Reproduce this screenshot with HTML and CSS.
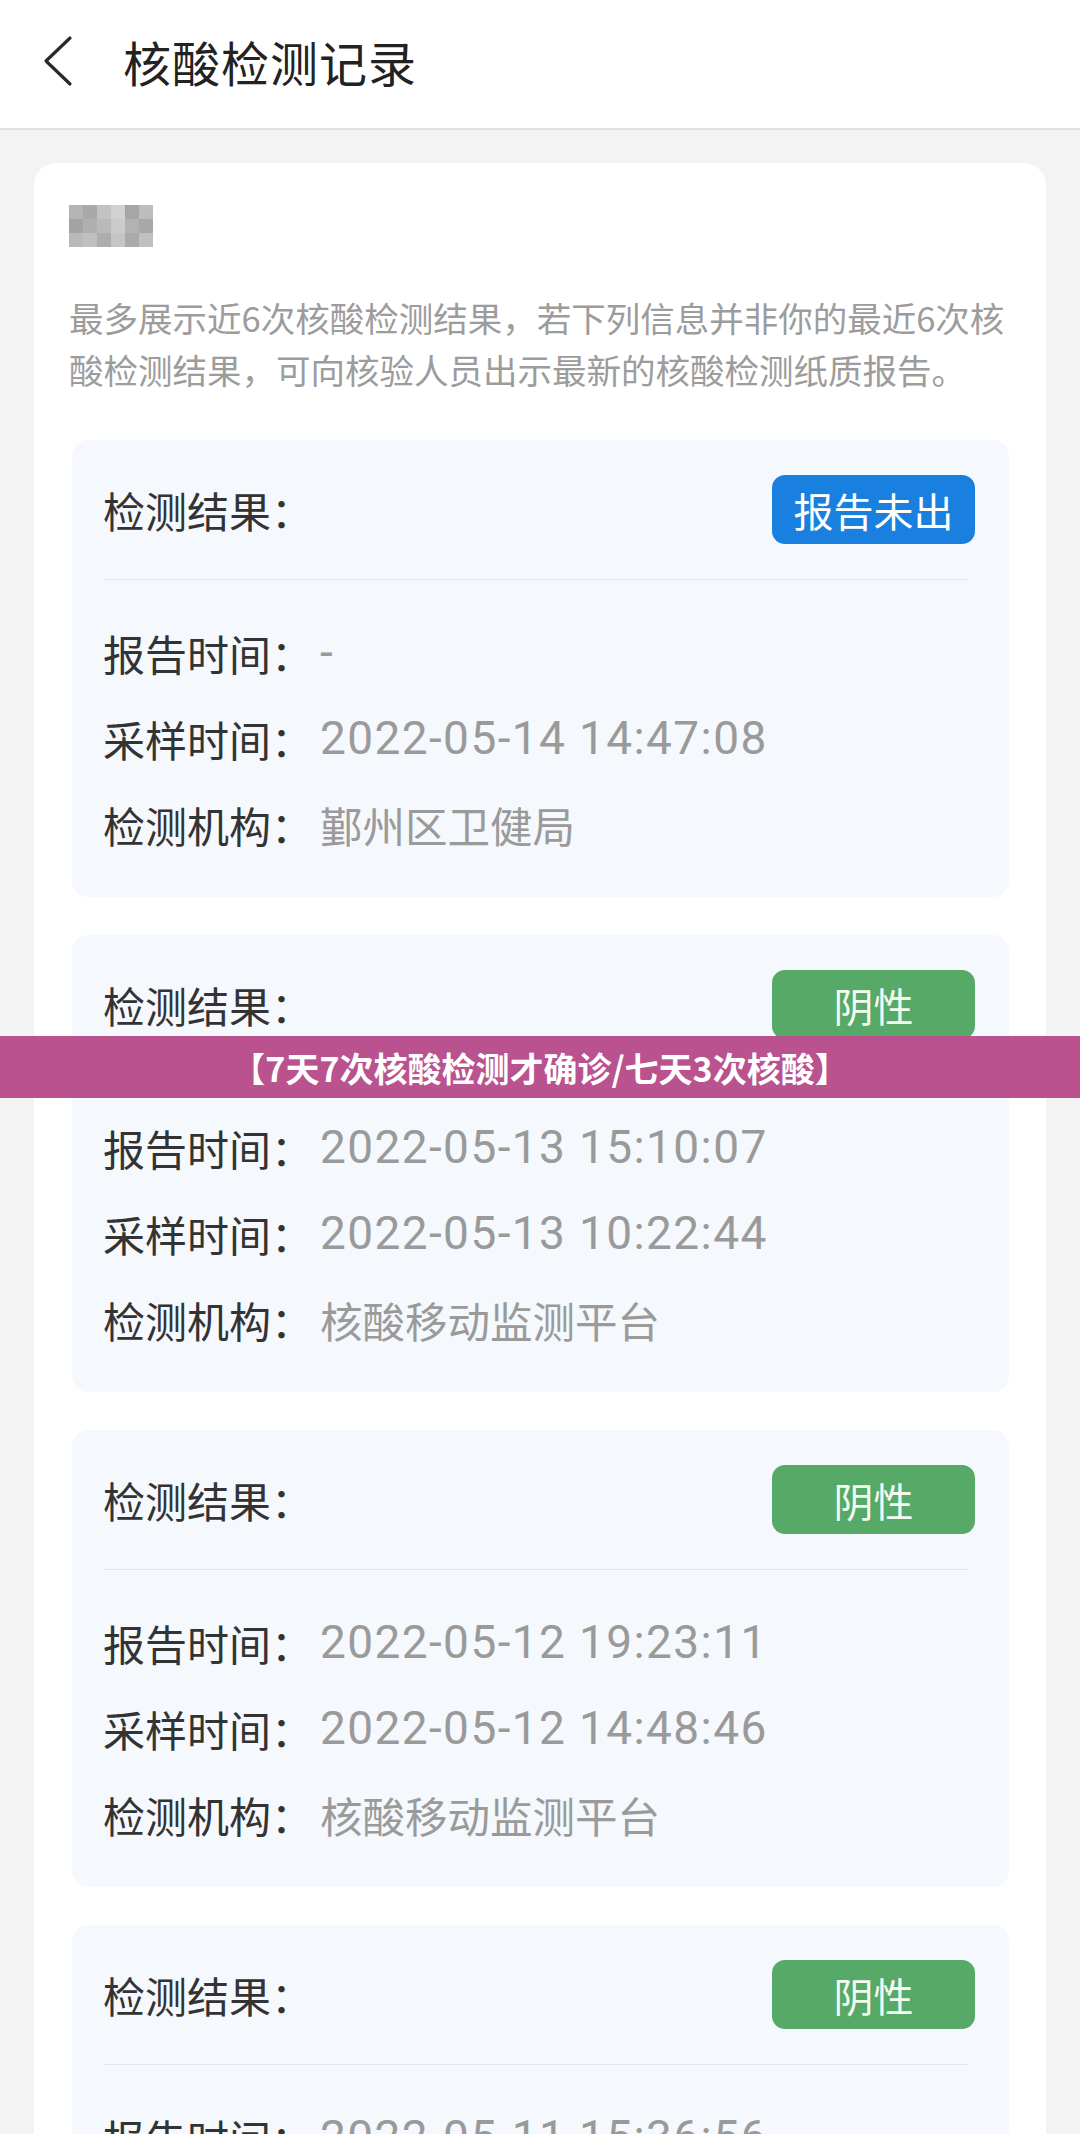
FILE: index.html
```html
<!DOCTYPE html>
<html lang="zh-CN">
<head>
<meta charset="utf-8">
<title>核酸检测记录</title>
<link rel="stylesheet" href="styles.css">
</head>
<body>
<div class="page">
  <header class="topbar">
    <svg class="back" width="34" height="52" viewBox="0 0 34 52"><polyline points="28,3 4,26 28,49" fill="none" stroke="#2a2a2a" stroke-width="3.2" stroke-linecap="round" stroke-linejoin="round"/></svg>
    <h1 class="title">核酸检测记录</h1>
  </header>
  <main class="main">
    <section class="card">
      <div class="mosaic">
        <i style="background:#b4b4b4"></i><i style="background:#a9a9a9"></i><i style="background:#c3c3c3"></i><i style="background:#d2d2d2"></i><i style="background:#a6a6a6"></i><i style="background:#bdbdbd"></i>
        <i style="background:#a3a3a3"></i><i style="background:#b0b0b0"></i><i style="background:#bababa"></i><i style="background:#cbcbcb"></i><i style="background:#b2b2b2"></i><i style="background:#a8a8a8"></i>
        <i style="background:#b9b9b9"></i><i style="background:#bfbfbf"></i><i style="background:#adadad"></i><i style="background:#c6c6c6"></i><i style="background:#aaaaaa"></i><i style="background:#c0c0c0"></i>
      </div>
      <p class="desc"><span class="line">最多展示近6次核酸检测结果，若下列信息并非你的最近6次核</span><span class="line">酸检测结果，可向核验人员出示最新的核酸检测纸质报告。</span></p>

      <div class="record">
        <div class="rec-head"><span class="label">检测结果：</span><span class="tag tag-blue">报告未出</span></div>
        <div class="divider"></div>
        <div class="rows">
          <div class="row"><span class="label">报告时间：</span><span class="value num">-</span></div>
          <div class="row"><span class="label">采样时间：</span><span class="value num">2022-05-14 14:47:08</span></div>
          <div class="row"><span class="label">检测机构：</span><span class="value">鄞州区卫健局</span></div>
        </div>
      </div>

      <div class="record">
        <div class="rec-head"><span class="label">检测结果：</span><span class="tag tag-green">阴性</span></div>
        <div class="divider"></div>
        <div class="rows">
          <div class="row"><span class="label">报告时间：</span><span class="value num">2022-05-13 15:10:07</span></div>
          <div class="row"><span class="label">采样时间：</span><span class="value num">2022-05-13 10:22:44</span></div>
          <div class="row"><span class="label">检测机构：</span><span class="value">核酸移动监测平台</span></div>
        </div>
      </div>

      <div class="record">
        <div class="rec-head"><span class="label">检测结果：</span><span class="tag tag-green">阴性</span></div>
        <div class="divider"></div>
        <div class="rows">
          <div class="row"><span class="label">报告时间：</span><span class="value num">2022-05-12 19:23:11</span></div>
          <div class="row"><span class="label">采样时间：</span><span class="value num">2022-05-12 14:48:46</span></div>
          <div class="row"><span class="label">检测机构：</span><span class="value">核酸移动监测平台</span></div>
        </div>
      </div>

      <div class="record">
        <div class="rec-head"><span class="label">检测结果：</span><span class="tag tag-green">阴性</span></div>
        <div class="divider"></div>
        <div class="rows">
          <div class="row"><span class="label">报告时间：</span><span class="value num">2022-05-11 15:36:56</span></div>
          <div class="row"><span class="label">采样时间：</span><span class="value num">2022-05-11 10:15:32</span></div>
          <div class="row"><span class="label">检测机构：</span><span class="value">核酸移动监测平台</span></div>
        </div>
      </div>
    </section>
  </main>
  <div class="banner">【7天7次核酸检测才确诊/七天3次核酸】</div>
</div>
</body>
</html>
```
FILE: styles.css
```css
* { box-sizing: border-box; }
html, body { margin: 0; padding: 0; }
body {
  width: 1080px;
  height: 2134px;
  overflow: hidden;
  background: #f3f3f3;
  font-family: "Noto Sans CJK SC", "Noto Sans", sans-serif;
}
.page { position: relative; width: 1080px; height: 2134px; overflow: hidden; }

.topbar {
  height: 130px;
  background: #ffffff;
  border-bottom: 2px solid #e0e0e0;
  display: flex;
  align-items: center;
  padding-left: 42px;
}
.back { display: block; margin-right: 47px; margin-top: -6px; }
.title {
  margin: 0;
  font-size: 48px;
  font-weight: 400;
  color: #222222;
  letter-spacing: 1px;
  margin-top: -6px;
}

.main { padding: 33px 34px 0 34px; }

.card {
  background: #ffffff;
  border-radius: 22px;
  padding: 42px 35px 0 35px;
}

.mosaic {
  display: grid;
  grid-template-columns: repeat(6, 14px);
  grid-template-rows: repeat(3, 14px);
  width: 84px;
  height: 42px;
  filter: blur(0.6px);
}
.mosaic i { display: block; }

.desc {
  margin: 44px 0 45px 0;
  font-size: 34.5px;
  line-height: 52px;
  color: #9c9c9c;
}
.desc .line { display: block; white-space: nowrap; }

.record {
  background: #f5f8fc;
  border-radius: 16px;
  margin: 0 2px 38px 3px;
  padding: 35px 34px 30px 31px;
}
.rec-head {
  display: flex;
  justify-content: space-between;
  align-items: center;
  height: 69px;
}
.label {
  font-size: 42px;
  color: #333333;
  white-space: nowrap;
}
.tag {
  width: 203px;
  height: 69px;
  border-radius: 13px;
  display: flex;
  align-items: center;
  justify-content: center;
  color: #ffffff;
  font-size: 40px;
  letter-spacing: 0;
}
.tag-blue { background: #1a80df; }
.tag-green { background: #57a968; color: #f2fbf0; }

.divider {
  height: 1px;
  background: #e2e6ec;
  margin: 35px 7px 0 0;
}
.rows { padding-top: 29px; }
.row {
  display: flex;
  align-items: center;
  height: 86px;
}
.row .label { width: 217px; }
.value {
  font-size: 42.5px;
  color: #9a9a9a;
  white-space: nowrap;
}
.value.num {
  font-family: "Roboto", "Noto Sans", sans-serif;
  font-size: 46px;
  letter-spacing: 1.4px;
}

.banner {
  position: absolute;
  left: 0;
  top: 1036px;
  width: 1080px;
  height: 62px;
  background: #b9528e;
  color: #ffffff;
  font-size: 34px;
  font-weight: 700;
  display: flex;
  align-items: center;
  justify-content: center;
  white-space: nowrap;
}
```
